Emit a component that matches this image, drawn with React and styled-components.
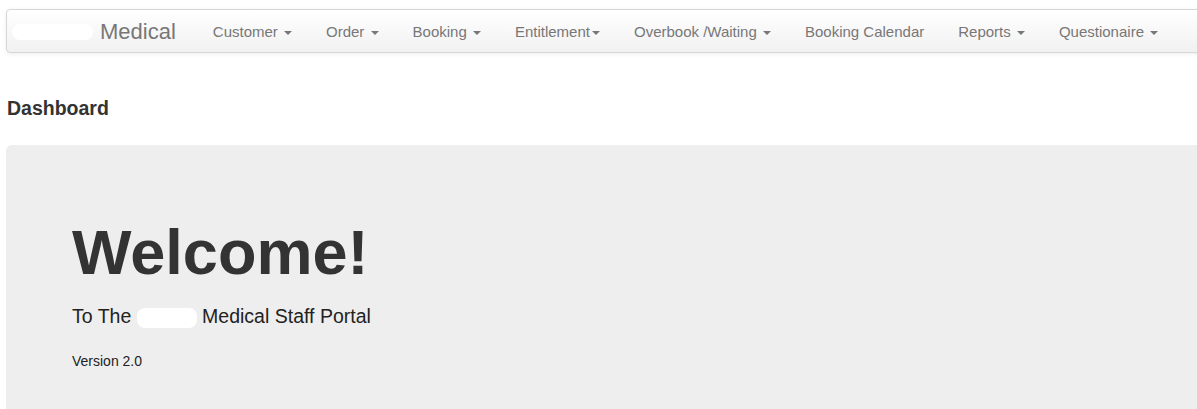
import styled, { createGlobalStyle } from "styled-components";

const menu = [
  { label: "Customer", caret: true },
  { label: "Order", caret: true },
  { label: "Booking", caret: true },
  { label: "Entitlement", caret: true, tight: true },
  { label: "Overbook /Waiting", caret: true },
  { label: "Booking Calendar" },
  { label: "Reports", caret: true },
  { label: "Questionaire", caret: true },
];

const App = () => {
  return (
    <>
      <GlobalStyle />
      <Page>
        <NavBar>
          <Brand>
            <Hidden width="81px" height="16px" />
            Medical
          </Brand>
          <NavList>
            {menu.map((item) => (
              <NavItem key={item.label}>
                {item.label}
                {item.caret && (
                  <>
                    {!item.tight && " "}
                    <Caret />
                  </>
                )}
              </NavItem>
            ))}
          </NavList>
        </NavBar>
        <PageTitle>Dashboard</PageTitle>
        <Jumbotron>
          <Welcome>Welcome!</Welcome>
          <Lead>
            To The <Hidden width="60px" height="20px" inline /> Medical Staff
            Portal
          </Lead>
          <Version>Version 2.0</Version>
        </Jumbotron>
      </Page>
    </>
  );
};

const GlobalStyle = createGlobalStyle`
  body {
    margin: 0;
    background: #fff;
    font-family: "Liberation Sans", Arial, sans-serif;
    color: #333;
  }
`;

const Page = styled.div`
  padding: 9px 0 0 6px;
  height: 409px;
  box-sizing: border-box;
  overflow: hidden;
`;

const NavBar = styled.nav`
  display: flex;
  align-items: center;
  height: 44px;
  box-sizing: border-box;
  margin-right: -12px;
  padding: 1px 0 0 5px;
  border: 1px solid #d6d6d6;
  border-radius: 4px;
  background: linear-gradient(to bottom, #ffffff 0%, #f1f1f1 100%);
  box-shadow: inset 0 1px 0 rgba(255, 255, 255, 0.15),
    0 1px 4px rgba(0, 0, 0, 0.075);
`;

const Brand = styled.div`
  display: flex;
  align-items: center;
  gap: 7px;
  font-size: 22px;
  color: #777;
  line-height: 1;
  margin-right: 20px;
  white-space: nowrap;
`;

const Hidden = styled.span`
  display: ${(props) => (props.inline ? "inline-block" : "block")};
  width: ${(props) => props.width};
  height: ${(props) => props.height};
  background: #fff;
  border-radius: 8px;
  vertical-align: middle;
`;

const NavList = styled.ul`
  display: flex;
  align-items: center;
  list-style: none;
  margin: 0;
  padding: 0;
`;

const NavItem = styled.li`
  padding: 1px 17px 0;
  font-size: 15px;
  line-height: 20px;
  color: #777;
  white-space: nowrap;
`;

const Caret = styled.span`
  display: inline-block;
  width: 0;
  height: 0;
  margin-left: 2px;
  vertical-align: middle;
  border-top: 4px solid #777;
  border-left: 4px solid transparent;
  border-right: 4px solid transparent;
`;

const PageTitle = styled.h3`
  margin: 45px 0 26px 1px;
  font-size: 19.5px;
  line-height: 1.1;
  font-weight: bold;
  color: #333;
`;

const Jumbotron = styled.section`
  background: #eee;
  border-radius: 6px;
  margin-right: -12px;
  padding: 73px 0 60px 66px;
  min-height: 300px;
`;

const Welcome = styled.h1`
  margin: 0;
  font-size: 63px;
  line-height: 1.1;
  font-weight: bold;
  color: #333;
`;

const Lead = styled.p`
  margin: 15px 0 0;
  font-size: 19.5px;
  line-height: 1.4;
  color: #222;
`;

const Version = styled.p`
  margin: 22px 0 0;
  font-size: 14px;
  line-height: 1.4;
  color: #222;
`;

export default App;
